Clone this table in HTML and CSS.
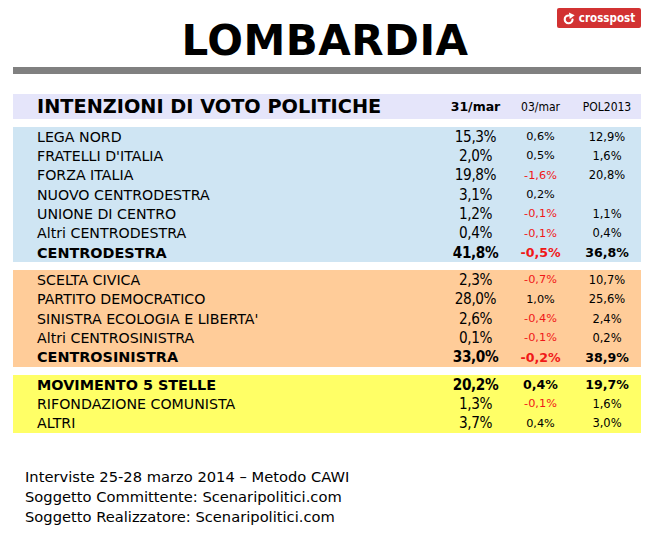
FILE: index.html
```html
<!DOCTYPE html>
<html lang="it">
<head>
<meta charset="utf-8">
<title>Lombardia</title>
<link rel="stylesheet" href="styles.css">
</head>
<body>
<div class="page">
  <header class="top">
    <h1 class="title">LOMBARDIA</h1>
    <a class="crosspost" href="#">
      <svg class="cp-icon" viewBox="0 0 12 12" width="13" height="13" aria-hidden="true">
        <path d="M8.8 7 A3.6 3.6 0 1 1 5.2 3.2" fill="none" stroke="#fff" stroke-width="2" stroke-linecap="round"/>
        <path d="M5.4 0.4 L10.8 3 L6.2 6.4 Z" fill="#fff"/>
      </svg>
      <span>crosspost</span>
    </a>
  </header>
  <div class="rule"></div>

  <div class="head row">
    <div class="name headtitle">INTENZIONI DI VOTO POLITICHE</div>
    <div class="c1 hb">31/mar</div>
    <div class="c2 hs">03/mar</div>
    <div class="c3 hs">POL2013</div>
  </div>

  <section class="block blue">
    <div class="row"><div class="name">LEGA NORD</div><div class="c1">15,3%</div><div class="c2">0,6%</div><div class="c3">12,9%</div></div>
    <div class="row"><div class="name">FRATELLI D'ITALIA</div><div class="c1">2,0%</div><div class="c2">0,5%</div><div class="c3">1,6%</div></div>
    <div class="row"><div class="name">FORZA ITALIA</div><div class="c1">19,8%</div><div class="c2 neg">-1,6%</div><div class="c3">20,8%</div></div>
    <div class="row"><div class="name">NUOVO CENTRODESTRA</div><div class="c1">3,1%</div><div class="c2">0,2%</div><div class="c3"></div></div>
    <div class="row"><div class="name">UNIONE DI CENTRO</div><div class="c1">1,2%</div><div class="c2 neg">-0,1%</div><div class="c3">1,1%</div></div>
    <div class="row"><div class="name">Altri CENTRODESTRA</div><div class="c1">0,4%</div><div class="c2 neg">-0,1%</div><div class="c3">0,4%</div></div>
    <div class="row total"><div class="name">CENTRODESTRA</div><div class="c1">41,8%</div><div class="c2 neg">-0,5%</div><div class="c3">36,8%</div></div>
  </section>

  <section class="block orange">
    <div class="row"><div class="name">SCELTA CIVICA</div><div class="c1">2,3%</div><div class="c2 neg">-0,7%</div><div class="c3">10,7%</div></div>
    <div class="row"><div class="name">PARTITO DEMOCRATICO</div><div class="c1">28,0%</div><div class="c2">1,0%</div><div class="c3">25,6%</div></div>
    <div class="row"><div class="name">SINISTRA ECOLOGIA E LIBERTA'</div><div class="c1">2,6%</div><div class="c2 neg">-0,4%</div><div class="c3">2,4%</div></div>
    <div class="row"><div class="name">Altri CENTROSINISTRA</div><div class="c1">0,1%</div><div class="c2 neg">-0,1%</div><div class="c3">0,2%</div></div>
    <div class="row total"><div class="name">CENTROSINISTRA</div><div class="c1">33,0%</div><div class="c2 neg">-0,2%</div><div class="c3">38,9%</div></div>
  </section>

  <section class="block yellow">
    <div class="row total"><div class="name">MOVIMENTO 5 STELLE</div><div class="c1">20,2%</div><div class="c2">0,4%</div><div class="c3">19,7%</div></div>
    <div class="row"><div class="name">RIFONDAZIONE COMUNISTA</div><div class="c1">1,3%</div><div class="c2 neg">-0,1%</div><div class="c3">1,6%</div></div>
    <div class="row"><div class="name">ALTRI</div><div class="c1">3,7%</div><div class="c2">0,4%</div><div class="c3">3,0%</div></div>
  </section>

  <footer class="notes">
    <p>Interviste 25-28 marzo 2014 – Metodo CAWI</p>
    <p>Soggetto Committente: Scenaripolitici.com</p>
    <p>Soggetto Realizzatore: Scenaripolitici.com</p>
  </footer>
</div>
</body>
</html>
```

FILE: styles.css
```css
html, body {
  margin: 0;
  padding: 0;
  background: #ffffff;
}
body {
  font-family: "DejaVu Sans", sans-serif;
  color: #000;
  width: 650px;
}
.page {
  width: 650px;
}
.top {
  position: relative;
  height: 67px;
}
.title {
  margin: 0;
  padding-top: 18px;
  text-align: center;
  font-size: 42px;
  line-height: 46px;
  font-weight: bold;
  letter-spacing: 0.5px;
}
.crosspost {
  position: absolute;
  left: 557px;
  top: 8px;
  width: 84px;
  height: 20px;
  background: #d23232;
  border-radius: 2px;
  color: #fff;
  text-decoration: none;
  display: flex;
  align-items: center;
  justify-content: center;
  gap: 3px;
  font-family: "DejaVu Sans Condensed", "DejaVu Sans", sans-serif;
  font-size: 11.5px;
  font-weight: bold;
}
.cp-icon {
  display: block;
}
.rule {
  margin: 0 9px 0 13px;
  height: 7px;
  background: #808080;
}
.row {
  display: grid;
  grid-template-columns: 430px 65px 65px 68px;
  align-items: center;
  height: 19.33px;
}
.name {
  padding-left: 24px;
  font-size: 14.2px;
  white-space: nowrap;
}
.c1, .c2, .c3 {
  text-align: center;
  white-space: nowrap;
}
.c1 {
  font-family: "DejaVu Sans Condensed", "DejaVu Sans", sans-serif;
  font-size: 15.2px;
  letter-spacing: -0.4px;
}
.c2 {
  font-size: 11.3px;
}
.c3 {
  font-size: 11.5px;
}
.neg {
  color: #f01818;
}
.total .name,
.total .c1,
.total .c2,
.total .c3 {
  font-weight: bold;
}
.total .name {
  font-size: 14.4px;
}
.total .c1 {
  font-size: 15.2px;
  letter-spacing: -0.4px;
}
.total .c2, .total .c3 {
  font-size: 12.6px;
}
.head {
  margin: 20px 9px 0 13px;
  height: 25px;
  background: #e5e5fa;
}
.head .headtitle {
  font-size: 19.3px;
  font-weight: bold;
}
.head .hb {
  font-family: "DejaVu Sans", sans-serif;
  font-size: 12.5px;
  font-weight: bold;
  letter-spacing: 0;
}
.head .hs {
  font-family: "DejaVu Sans Condensed", "DejaVu Sans", sans-serif;
  font-size: 12px;
}
.block {
  margin: 8px 9px 0 13px;
}
.blue {
  background: #cfe5f3;
}
.orange {
  background: #ffcc99;
}
.yellow {
  background: #ffff66;
}
.notes {
  margin-top: 34px;
  padding-left: 25px;
  font-size: 14.7px;
  line-height: 20px;
}
.notes p {
  margin: 0;
}
```
